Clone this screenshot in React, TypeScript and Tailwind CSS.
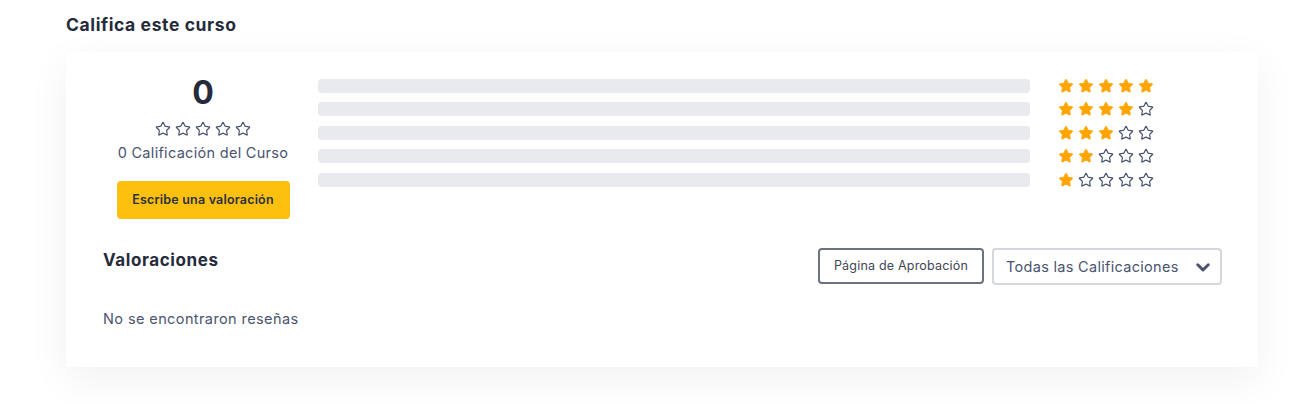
import React from 'react';

// Estrella con esquinas redondeadas, rellena o solo contorno
function Star({ filled, size = 16 }: { filled: boolean; size?: number }) {
    return (
        <svg
            width={size}
            height={size}
            viewBox="0 0 24 24"
            fill={filled ? '#ffa500' : 'none'}
            stroke={filled ? '#ffa500' : '#4a5470'}
            strokeWidth={filled ? 1.5 : 1.8}
            strokeLinejoin="round"
            strokeLinecap="round"
        >
            <path d="M11.52 2.3a.53.53 0 0 1 .95 0l2.31 4.68a2.12 2.12 0 0 0 1.6 1.16l5.16.76a.53.53 0 0 1 .3.9l-3.74 3.64a2.12 2.12 0 0 0-.61 1.88l.88 5.14a.53.53 0 0 1-.77.56l-4.62-2.43a2.12 2.12 0 0 0-1.97 0L6.4 21.02a.53.53 0 0 1-.77-.56l.88-5.14a2.12 2.12 0 0 0-.61-1.88L2.16 9.8a.53.53 0 0 1 .3-.9l5.16-.76a2.12 2.12 0 0 0 1.6-1.16z" />
        </svg>
    );
}

function StarRow({ count }: { count: number }) {
    return (
        <div className="flex gap-1">
            {[0, 1, 2, 3, 4].map((i) => (
                <Star key={i} filled={i < count} />
            ))}
        </div>
    );
}

export default function App() {
    const rows = [5, 4, 3, 2, 1];

    return (
        <main className="min-h-[404px] bg-white font-['Inter',sans-serif] text-[#252b3b]">
            <div className="w-[1192px] ml-[66px] pt-[13px]">
                <h2 className="text-[17.5px] leading-6 font-bold tracking-[0.6px] text-[#252b3b]">Califica este curso</h2>

                <div className="mt-[15px] bg-white shadow-[0_12px_40px_rgba(0,0,0,0.06)] pl-[37px] pr-[36px] pt-[22px] pb-[38px]">
                    <div className="flex">
                        {/* Resumen de la calificacion */}
                        <div className="w-[200px] flex flex-col items-center">
                            <div className="text-[32px] leading-10 font-bold text-[#252b3b] mt-[-1px]">0</div>
                            <div className="mt-[8px]">
                                <StarRow count={0} />
                            </div>
                            <p className="mt-[6px] text-[14.5px] leading-5 tracking-[0.3px] text-[#4a5470]">0 Calificación del Curso</p>
                            <button className="mt-[18px] w-[173px] h-[38px] rounded bg-[#fdc00e] text-[12.5px] font-semibold tracking-[0.2px] text-[#2a3040]">
                                Escribe una valoración
                            </button>
                        </div>

                        {/* Barras de distribucion */}
                        <div className="ml-[15px] w-[712px] flex flex-col">
                            {rows.map((r) => (
                                <div key={r} className="h-[23.5px] flex items-center">
                                    <div className="w-full h-[14px] rounded bg-[#e8eaee]" />
                                </div>
                            ))}
                        </div>

                        <div className="ml-[28px] flex flex-col">
                            {rows.map((r) => (
                                <div key={r} className="h-[23.5px] flex items-center">
                                    <StarRow count={r} />
                                </div>
                            ))}
                        </div>
                    </div>

                    {/* Listado de valoraciones */}
                    <div className="mt-[29px] flex items-start justify-between">
                        <h3 className="text-[17px] leading-6 font-bold tracking-[0.6px] text-[#252b3b]">Valoraciones</h3>
                        <div className="flex gap-2">
                            <button className="w-[166px] h-[36px] rounded border-2 border-[#6b7280] text-[12.5px] tracking-[0.2px] text-[#3f4654]">
                                Página de Aprobación
                            </button>
                            <div className="w-[230px] h-[37px] rounded-sm border-2 border-[#d4d8de] flex items-center justify-between pl-[12px] pr-[8px] text-[14.5px] tracking-[0.3px] text-[#4a5470]">
                                <span>Todas las Calificaciones</span>
                                <svg width="18" height="18" viewBox="0 0 24 24" fill="none" stroke="#4a5470" strokeWidth="4" strokeLinecap="round" strokeLinejoin="round">
                                    <path d="M5 9l7 7 7-7" />
                                </svg>
                            </div>
                        </div>
                    </div>

                    <p className="mt-[24px] text-[14.5px] leading-5 tracking-[0.4px] text-[#4a5470]">No se encontraron reseñas</p>
                </div>
            </div>
        </main>
    );
}
